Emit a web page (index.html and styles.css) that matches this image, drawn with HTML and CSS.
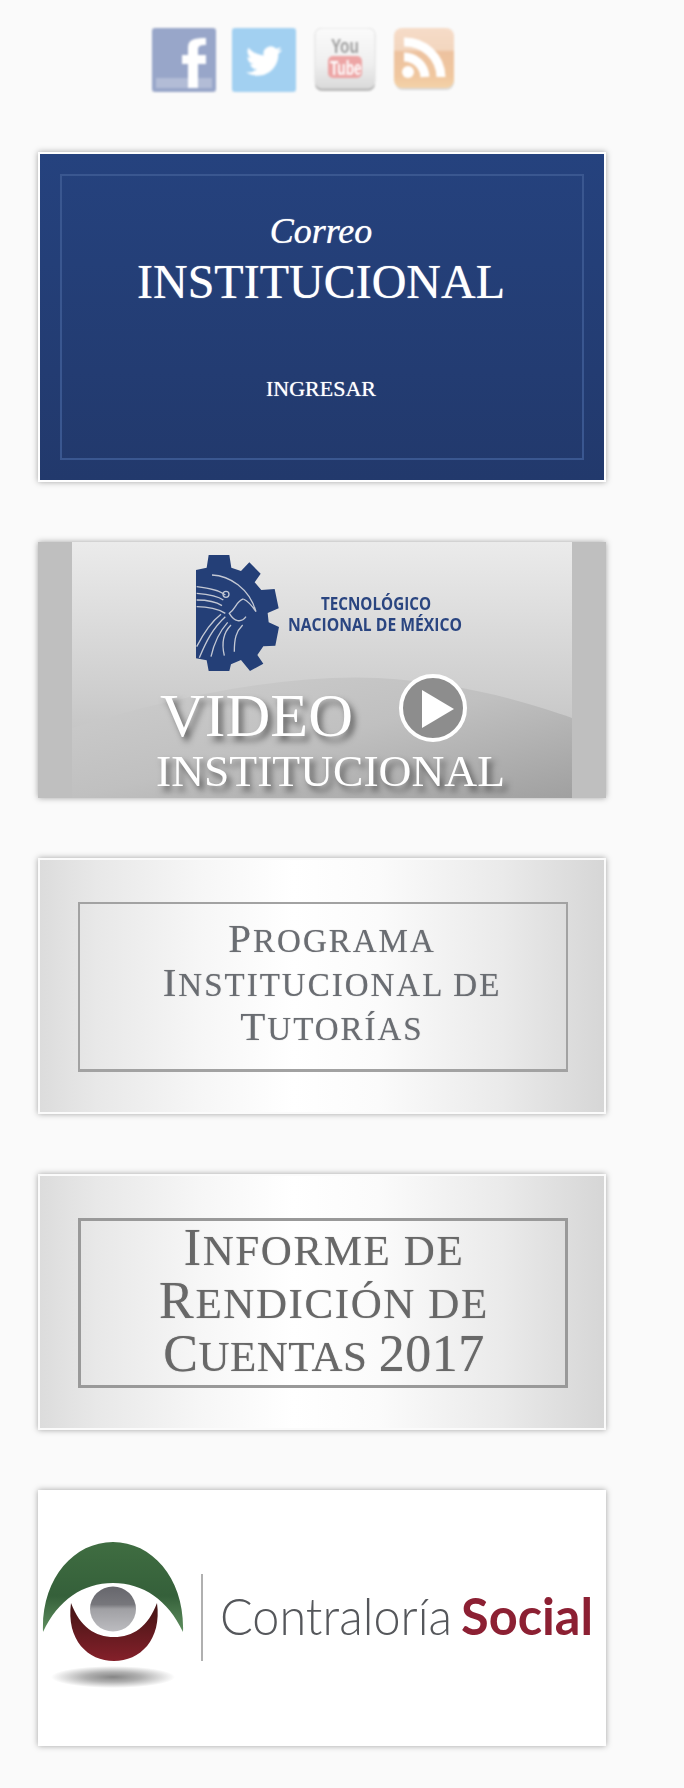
FILE: index.html
```html
<!DOCTYPE html>
<html lang="es">
<head>
<meta charset="utf-8">
<title>Enlaces institucionales</title>
<link rel="stylesheet" href="styles.css">
</head>
<body>
<main class="page">
  <nav class="social">
    <a class="icon" href="#" aria-label="Facebook">
      <svg width="64" height="64" viewBox="0 0 64 64">
        <rect width="64" height="64" rx="3" fill="#98a6c9"/>
        <rect x="4" y="50" width="56" height="10" fill="#fff" opacity=".25"/>
        <path d="M36 60V36h-6v-9h6v-7c0-8 5-10 18-10v7c-6 0-8 1-8 5v5h8v9h-8v24z" fill="#fff"/>
      </svg>
    </a>
    <a class="icon" href="#" aria-label="Twitter">
      <svg width="64" height="64" viewBox="0 0 64 64">
        <rect width="64" height="64" rx="3" fill="#a2d0f1"/>
        <path transform="translate(14 15) scale(1.5)" fill="#fff" d="M23.953 4.57a10 10 0 01-2.825.775 4.958 4.958 0 002.163-2.723c-.951.555-2.005.959-3.127 1.184a4.92 4.92 0 00-8.384 4.482C7.69 8.095 4.067 6.13 1.64 3.162a4.822 4.822 0 00-.666 2.475c0 1.71.87 3.213 2.188 4.096a4.904 4.904 0 01-2.228-.616v.06a4.923 4.923 0 003.946 4.827 4.996 4.996 0 01-2.212.085 4.936 4.936 0 004.604 3.417 9.867 9.867 0 01-6.102 2.105c-.39 0-.779-.023-1.17-.067a13.995 13.995 0 007.557 2.209c9.053 0 13.998-7.496 13.998-13.985 0-.21 0-.42-.015-.63A9.935 9.935 0 0024 4.59z"/>
      </svg>
    </a>
    <a class="icon" href="#" aria-label="YouTube">
      <svg width="64" height="64" viewBox="0 0 64 64">
        <defs>
          <linearGradient id="ytBg" x1="0" y1="0" x2="0" y2="1">
            <stop offset="0" stop-color="#fbfbfb"/><stop offset=".6" stop-color="#efefef"/><stop offset="1" stop-color="#dadada"/>
          </linearGradient>
        </defs>
        <rect x="3" y="3" width="60" height="60" rx="7" fill="#b8b8b8"/>
        <rect x="3" y="0" width="60" height="60" rx="7" fill="url(#ytBg)" stroke="#dedede"/>
        <text class="yt-you" transform="translate(19 25) scale(.73 1)">You</text>
        <rect x="16" y="28" width="34" height="22" rx="5" fill="#eda5a5"/>
        <text class="yt-tube" transform="translate(18 47) scale(.65 1)">Tube</text>
      </svg>
    </a>
    <a class="icon" href="#" aria-label="RSS">
      <svg width="64" height="64" viewBox="0 0 64 64">
        <defs>
          <linearGradient id="rssBg" x1="0" y1="0" x2="0" y2="1">
            <stop offset="0" stop-color="#f6dcc8"/><stop offset=".36" stop-color="#f3d6bf"/><stop offset=".4" stop-color="#edc29f"/><stop offset=".8" stop-color="#f0c79f"/><stop offset="1" stop-color="#f4d3a8"/>
          </linearGradient>
        </defs>
        <rect x="3" y="2" width="59" height="60" rx="8" fill="#d9d9d9"/>
        <rect x="2" y="0" width="60" height="60" rx="8" fill="url(#rssBg)"/>
        <circle cx="16" cy="44" r="6" fill="#fff"/>
        <path d="M12 29A21 21 0 0 1 33 49M12 14A36 36 0 0 1 49 49" fill="none" stroke="#fff" stroke-width="9"/>
      </svg>
    </a>
  </nav>

  <a class="card mail" href="#">
    <div class="mail-frame">
      <p class="mail-kicker">Correo</p>
      <p class="mail-title">INSTITUCIONAL</p>
      <p class="mail-action">INGRESAR</p>
    </div>
  </a>

  <a class="banner" href="#">
    <svg class="art" width="568" height="256" viewBox="0 0 568 256">
      <defs>
        <linearGradient id="vTop" x1="0" y1="0" x2="0" y2="1">
          <stop offset="0" stop-color="#ebebeb"/><stop offset=".55" stop-color="#d0d0d0"/><stop offset="1" stop-color="#b8b8b8"/>
        </linearGradient>
        <linearGradient id="vLow" x1="0" y1="0" x2="1" y2="1">
          <stop offset="0" stop-color="#cecece"/><stop offset=".5" stop-color="#c0c0c0"/><stop offset="1" stop-color="#a0a0a0"/>
        </linearGradient>
      </defs>
      <rect width="568" height="256" fill="#bfbfbf"/>
      <rect x="34" width="500" height="256" fill="url(#vTop)"/>
      <path d="M34 186C150 150 260 132 340 136C420 140 490 160 534 176V256H34z" fill="url(#vLow)"/>
      <g class="soft">
        <g transform="translate(148 3) scale(.3333)">
          <path fill="#243f77" d="M30 75L62 68L68 30H130L136 68L165 78L190 52L224 86L206 112L226 135L266 132L278 190L245 204L248 232L279 246L268 302L232 304L214 330L232 356L192 378L165 345L135 358L130 378H68L62 346L30 340z"/>
          <g fill="none" stroke="#c3c8d4" stroke-width="4">
            <path d="M78 90C130 92 190 130 210 200C200 185 190 170 172 162"/>
            <path d="M32 125C70 130 100 135 118 150M32 145C70 148 95 152 112 165M32 165C65 165 90 170 108 182M32 185C60 185 90 188 118 205"/>
            <circle cx="120" cy="148" r="9"/>
            <path d="M172 162C150 170 150 190 130 205C145 230 165 235 180 215"/>
            <path d="M40 338C60 290 80 250 118 215M75 335C85 290 100 260 125 232M115 332C105 290 115 260 135 240M145 320C145 280 150 260 170 240M32 305C50 270 70 235 105 208"/>
          </g>
        </g>
        <text class="tec" x="283" y="68" textLength="110" lengthAdjust="spacingAndGlyphs">TECNOLÓGICO</text>
        <text class="tec" x="250" y="89" textLength="174" lengthAdjust="spacingAndGlyphs">NACIONAL DE MÉXICO</text>
        <text class="v-big" x="122" y="194" textLength="193" lengthAdjust="spacingAndGlyphs">VIDEO</text>
        <text class="v-sub" x="118" y="244" textLength="349" lengthAdjust="spacingAndGlyphs">INSTITUCIONAL</text>
        <circle cx="395" cy="166" r="32" fill="#8d8d8d" stroke="#fff" stroke-width="4"/>
        <path d="M384 148L384 186L416 167z" fill="#fff"/>
      </g>
    </svg>
  </a>

  <a class="banner plaque" href="#">
    <div class="plaque-frame tutor">
      <p class="plaque-line"><span class="cap">P</span>rograma</p>
      <p class="plaque-line"><span class="cap">I</span>nstitucional de</p>
      <p class="plaque-line"><span class="cap">T</span>utorías</p>
    </div>
  </a>

  <a class="banner plaque" href="#">
    <div class="plaque-frame report">
      <p class="plaque-line"><span class="cap">I</span>nforme de</p>
      <p class="plaque-line"><span class="cap">R</span>endición de</p>
      <p class="plaque-line tight"><span class="cap">C</span>uentas <span class="cap">2017</span></p>
    </div>
  </a>

  <a class="banner social-audit" href="#">
    <svg class="art" width="568" height="256" viewBox="0 0 568 256">
      <defs>
        <linearGradient id="green" x1="0" y1="0" x2="0" y2="1">
          <stop offset="0" stop-color="#3f6d41"/><stop offset=".6" stop-color="#35603a"/><stop offset="1" stop-color="#5f8f5f"/>
        </linearGradient>
        <linearGradient id="red" x1="0" y1="0" x2="0" y2="1">
          <stop offset="0" stop-color="#421414"/><stop offset="1" stop-color="#84202a"/>
        </linearGradient>
        <linearGradient id="pupil" x1="0" y1="0" x2="0" y2="1">
          <stop offset="0" stop-color="#66666c"/><stop offset=".4" stop-color="#77777c"/><stop offset=".5" stop-color="#a0a0a4"/><stop offset="1" stop-color="#bcbcc0"/>
        </linearGradient>
        <radialGradient id="floor">
          <stop offset="0" stop-color="#858585"/><stop offset=".45" stop-color="#b0b0b0"/><stop offset="1" stop-color="#fff"/>
        </radialGradient>
      </defs>
      <rect width="568" height="256" fill="#fff"/>
      <g class="soft">
        <path d="M5 142C3 90 35 52 75 52C115 52 147 90 145 142C130 110 105 93 75 93C45 93 20 110 5 142Z" fill="url(#green)"/>
        <path d="M33 113C28 150 50 171 76 171C102 171 124 150 119 113C110 137 95 147 76 147C57 147 42 137 33 113Z" fill="url(#red)"/>
        <ellipse cx="75" cy="119" rx="23" ry="22.5" fill="url(#pupil)"/>
        <ellipse cx="75" cy="187" rx="62" ry="11" fill="url(#floor)"/>
        <rect x="163" y="84" width="2" height="87" fill="#b0b0b0"/>
        <text class="cs-light" x="182" y="145" textLength="232" lengthAdjust="spacingAndGlyphs">Contraloría</text>
        <text class="cs-bold" x="423" y="145" textLength="132" lengthAdjust="spacingAndGlyphs">Social</text>
      </g>
    </svg>
  </a>
</main>
</body>
</html>
```

FILE: styles.css
```css
* {
  box-sizing: border-box;
}

html,
body {
  margin: 0;
  background: #fafafa;
}

p {
  margin: 0;
}

a {
  text-decoration: none;
  color: inherit;
}

.page {
  width: 684px;
  height: 1788px;
  padding: 28px 78px 42px 38px;
  display: flex;
  flex-direction: column;
  gap: 60px;
}

.social {
  display: flex;
  gap: 16px;
  margin-left: 114px;
  margin-bottom: -28px;
  height: 92px;
  padding-bottom: 28px;
}

.icon {
  display: block;
  width: 64px;
  height: 64px;
  filter: blur(.9px);
}

.icon svg,
.art {
  display: block;
}

.yt-you,
.yt-tube {
  font-family: "Liberation Sans", Arial, sans-serif;
  font-weight: 700;
}

.yt-you {
  font-size: 21px;
  fill: #a0a0a0;
}

.yt-tube {
  font-size: 21px;
  fill: #fff;
}

.card {
  display: block;
  width: 568px;
  height: 330px;
  padding: 20px;
  border: 2px solid #fff;
  background: linear-gradient(#25427e, #22396c);
  box-shadow: 0 0 6px rgba(0, 0, 0, .35);
}

.mail-frame {
  height: 286px;
  border: 2px solid #3a5790;
  display: flex;
  flex-direction: column;
  align-items: center;
  padding: 35px 2px 0 0;
  color: #fff;
  font-family: "Liberation Serif", "Times New Roman", serif;
  text-shadow: 0 0 1px rgba(255, 255, 255, .8);
}

.mail-kicker {
  font-size: 36px;
  line-height: 40px;
  font-style: italic;
  margin-bottom: 4px;
}

.mail-title {
  font-size: 48px;
  line-height: 54px;
}

.mail-action {
  margin-top: 68px;
  font-size: 22px;
  line-height: 24px;
}

.banner {
  display: block;
  width: 568px;
  height: 256px;
  box-shadow: 0 0 6px rgba(0, 0, 0, .35);
}

.soft {
  filter: blur(.7px);
}

.tec {
  font-family: "Open Sans", "Liberation Sans", sans-serif;
  font-weight: 700;
  font-size: 17px;
  fill: #2a4580;
}

.v-big,
.v-sub {
  font-family: "Liberation Serif", "Times New Roman", serif;
  fill: #fff;
  filter: drop-shadow(4px 5px 3px rgba(0, 0, 0, .5));
}

.v-big {
  font-size: 62px;
}

.v-sub {
  font-size: 44px;
}

.plaque {
  padding: 42px 36px 40px 38px;
  border: 2px solid #fbfbfb;
  background: linear-gradient(90deg, #dcdcdc 0, #e8e8e8 10%, #f6f6f6 28%, #fff 45%, #fbfbfb 60%, #eaeaea 82%, #d6d6d6 100%);
}

.plaque-frame {
  height: 170px;
  display: flex;
  flex-direction: column;
  align-items: center;
  justify-content: center;
  text-transform: uppercase;
  font-family: "Liberation Serif", "Times New Roman", serif;
  filter: blur(.6px);
}

.cap {
  line-height: 0;
}

.tutor {
  padding: 0 0 3px 18px;
  border: 2px solid #a2a2a2;
  border-bottom-width: 3px;
  color: #6a6d72;
  font-size: 33px;
  line-height: 44px;
  letter-spacing: 2px;
  text-shadow: 0 0 1px rgba(106, 109, 114, .6);
}

.tutor .cap {
  font-size: 41px;
}

.report {
  padding-left: 2px;
  border: 3px solid #999;
  color: #686868;
  font-size: 43px;
  line-height: 53px;
  letter-spacing: 1.6px;
  text-shadow: 0 0 1px rgba(104, 104, 104, .6);
}

.report .cap {
  font-size: 52px;
}

.report .tight {
  letter-spacing: .5px;
}

.cs-light,
.cs-bold {
  font-family: Lato, "Open Sans", sans-serif;
  font-size: 52px;
}

.cs-light {
  font-weight: 300;
  fill: #55575b;
}

.cs-bold {
  font-weight: 700;
  fill: #8c2033;
}
```
